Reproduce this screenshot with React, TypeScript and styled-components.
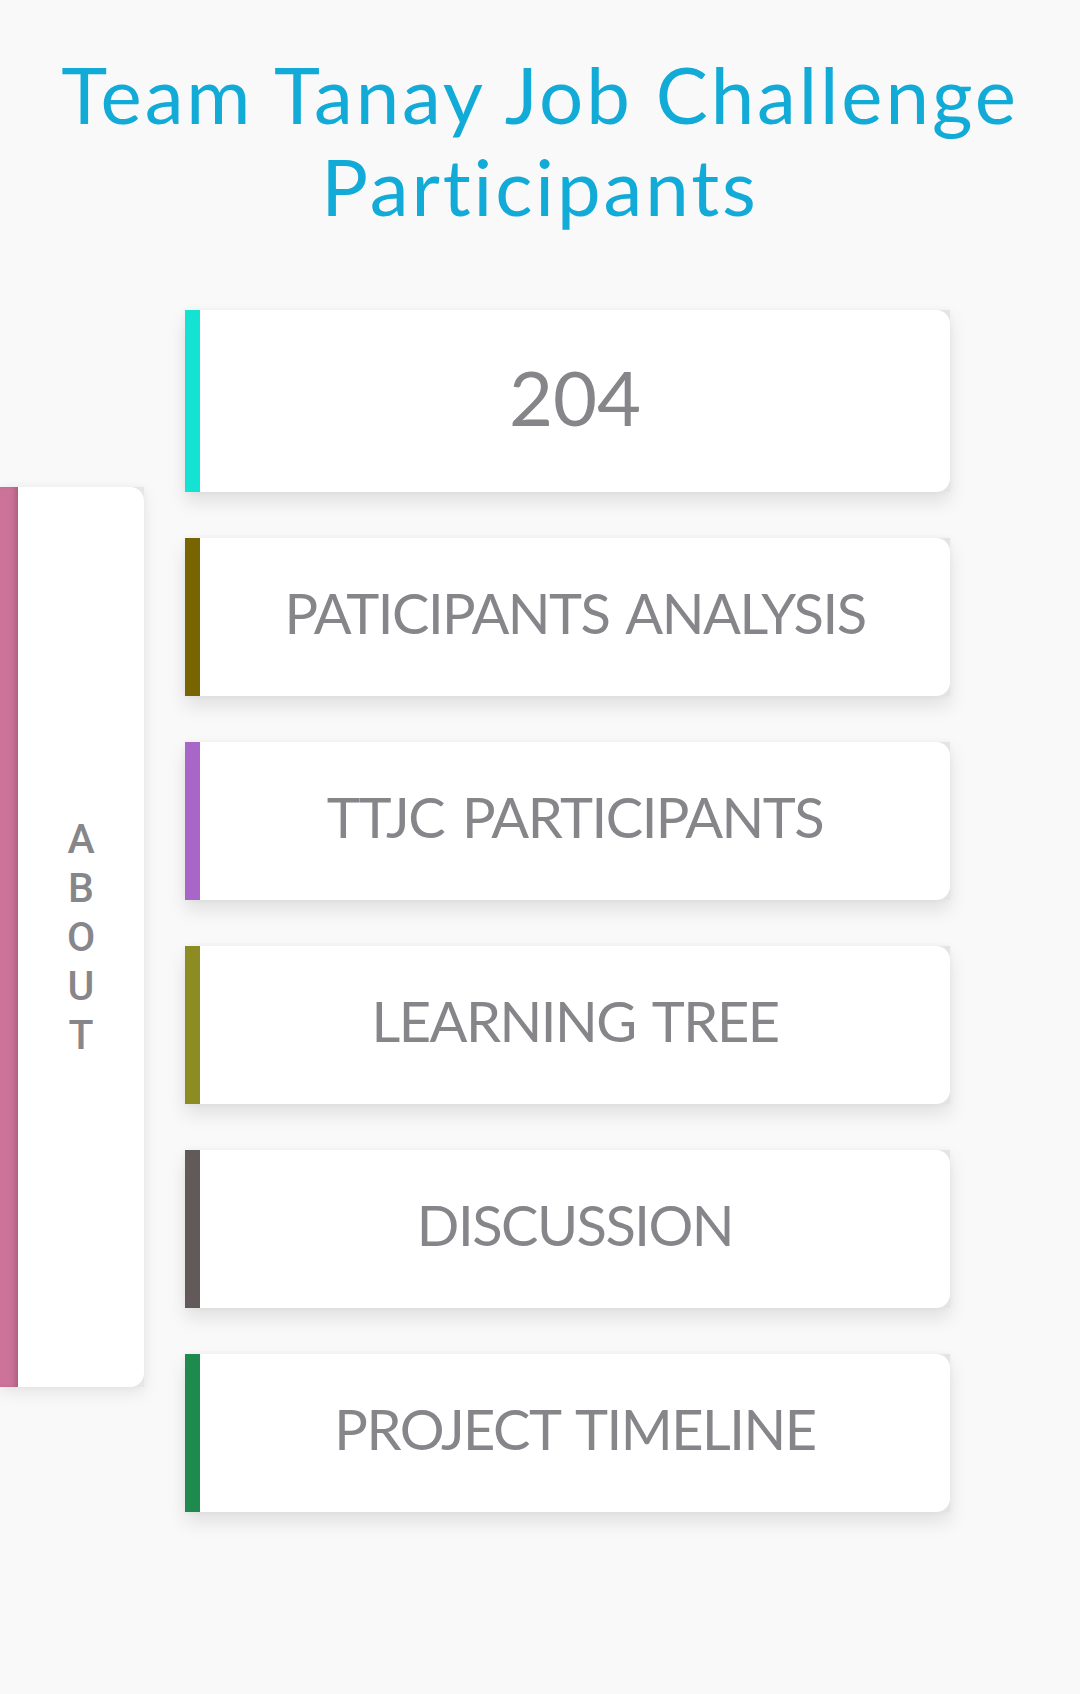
import React from "react";
import styled, { createGlobalStyle } from "styled-components";

const GlobalStyle = createGlobalStyle`
  html, body {
    margin: 0;
    padding: 0;
    background: #f9f9f9;
  }
  body {
    font-family: "Lato", "Noto Sans", sans-serif;
  }
`;

const Page = styled.div`
  width: 1080px;
  min-height: 1694px;
  background: #f9f9f9;
  display: flex;
  flex-direction: column;
`;

const Title = styled.h1`
  margin: 0;
  padding-top: 48px;
  text-align: center;
  font-family: "Lato", sans-serif;
  font-weight: 400;
  font-size: 78px;
  line-height: 92px;
  letter-spacing: 2.9px;
  color: #12aad6;
`;

const Body = styled.div`
  display: flex;
  align-items: flex-start;
  gap: 41px;
  margin-top: 78px;
`;

const SideTab = styled.aside`
  display: flex;
  width: 144px;
  height: 900px;
  margin-top: 177px;
  background: #e6e6e6;
  box-shadow: 0 6px 16px rgba(0, 0, 0, 0.08), 0 0 8px rgba(0, 0, 0, 0.04);
`;

const Accent = styled.div<{ $color: string; $w: number; $shade?: boolean }>`
  width: ${(p) => p.$w}px;
  flex: none;
  background: ${(p) => p.$color};
  box-shadow: ${(p) => (p.$shade ? "inset -5px 0 6px -3px rgba(0, 0, 0, 0.22)" : "none")};
`;

const SideFace = styled.div`
  flex: 1;
  background: #fff;
  border-radius: 0 14px 14px 0;
  display: flex;
  align-items: center;
  justify-content: center;
`;

const Vertical = styled.div`
  display: flex;
  flex-direction: column;
  align-items: center;
  font-family: "Roboto", "Liberation Sans", sans-serif;
  font-weight: 500;
  font-size: 41px;
  line-height: 49px;
  color: #87868b;
`;

const Cards = styled.div`
  display: flex;
  flex-direction: column;
  gap: 46px;
  width: 765px;
`;

const Card = styled.a<{ $tall?: boolean }>`
  display: flex;
  height: ${(p) => (p.$tall ? 182 : 158)}px;
  background: #e4e4e4;
  text-decoration: none;
  box-shadow: 0 10px 18px rgba(0, 0, 0, 0.1), 0 0 6px rgba(0, 0, 0, 0.04);
`;

const Face = styled.div<{ $tall?: boolean }>`
  flex: 1;
  background: #fff;
  border-radius: 0 14px 14px 0;
  display: flex;
  align-items: center;
  justify-content: center;
  font-family: "Lato", sans-serif;
  font-weight: 400;
  font-size: ${(p) => (p.$tall ? 76 : 56)}px;
  letter-spacing: ${(p) => (p.$tall ? 0 : -1.5)}px;
  word-spacing: 5px;
  color: #86858a;
  padding-bottom: ${(p) => (p.$tall ? 10 : 9)}px;
`;

const items = [
  { label: "204", color: "#14e2d2", tall: true },
  { label: "PATICIPANTS ANALYSIS", color: "#786400" },
  { label: "TTJC PARTICIPANTS", color: "#a866c9" },
  { label: "LEARNING TREE", color: "#8c8c22" },
  { label: "DISCUSSION", color: "#625a5a" },
  { label: "PROJECT TIMELINE", color: "#1f8a4d" },
];

export default function App() {
  return (
    <Page>
      <GlobalStyle />
      <Title>
        Team Tanay Job Challenge
        <br />
        Participants
      </Title>
      <Body>
        <SideTab>
          <Accent $color="#cd7399" $w={18} $shade />
          <SideFace>
            <Vertical>
              {"ABOUT".split("").map((c, i) => (
                <span key={i}>{c}</span>
              ))}
            </Vertical>
          </SideFace>
        </SideTab>
        <Cards>
          {items.map((it) => (
            <Card key={it.label} $tall={it.tall}>
              <Accent $color={it.color} $w={15} />
              <Face $tall={it.tall}>{it.label}</Face>
            </Card>
          ))}
        </Cards>
      </Body>
    </Page>
  );
}
